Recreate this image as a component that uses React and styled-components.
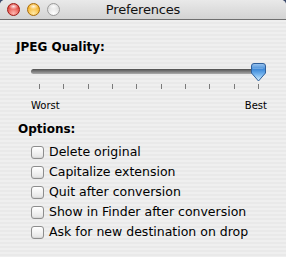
import React from 'react';
import styled, { createGlobalStyle } from 'styled-components';

const GlobalStyle = createGlobalStyle`
  html, body {
    margin: 0;
    padding: 0;
    background: #3b4a6b;
  }
  body {
    font-family: "DejaVu Sans", "Liberation Sans", sans-serif;
    color: #000;
  }
`;

const Window = styled.div`
  width: 286px;
  height: 257px;
  border-radius: 5px 5px 0 0;
  overflow: hidden;
  display: flex;
  flex-direction: column;
  background: repeating-linear-gradient(
    to bottom,
    #efefef 0,
    #efefef 2px,
    #e9e9e9 2px,
    #e9e9e9 4px
  );
`;

const TitleBar = styled.header`
  height: 19px;
  flex: none;
  display: grid;
  grid-template-columns: 1fr auto 1fr;
  align-items: center;
  padding: 0 7px;
  background: linear-gradient(to bottom, #e9e9e9, #d3d3d3);
  border-bottom: 1px solid #6f6f6f;
`;

const Lights = styled.div`
  display: flex;
  gap: 7px;
  align-items: center;
`;

const palettes = {
  close: ['#ffb7b0', '#e0443c', '#9c1a14'],
  minimize: ['#ffe9a8', '#f5b226', '#a86a08'],
  zoom: ['#ffffff', '#dcdcdc', '#9a9a9a'],
};

const Light = styled.span`
  width: 13px;
  height: 13px;
  border-radius: 50%;
  box-sizing: border-box;
  border: 1px solid ${({ kind }) => palettes[kind][2]};
  background:
    radial-gradient(ellipse 5px 3px at 50% 22%, rgba(255, 255, 255, 0.9), rgba(255, 255, 255, 0) 100%),
    radial-gradient(circle at 50% 85%, ${({ kind }) => palettes[kind][0]} 0, ${({ kind }) => palettes[kind][1]} 70%);
`;

const Title = styled.h1`
  margin: 0;
  font-size: 13px;
  font-weight: normal;
  letter-spacing: -0.2px;
  color: #111;
`;

const Body = styled.main`
  padding: 20px 16px 0 16px;
`;

const Heading = styled.h2`
  margin: 0;
  font-size: 12px;
  font-weight: bold;
  line-height: 15px;
`;

const Slider = styled.div`
  margin: 8px 0 0 15px;
  width: 236px;
`;

const TrackRow = styled.div`
  position: relative;
  height: 18px;
`;

const Track = styled.div`
  position: absolute;
  left: 0;
  right: 8px;
  top: 6px;
  height: 5px;
  border-radius: 3px;
  background: linear-gradient(to bottom, #4f4f4f, #858585 60%, #acacac);
`;

const Thumb = styled.svg`
  position: absolute;
  right: 1px;
  top: 0;
`;

const Ticks = styled.div`
  display: flex;
  justify-content: space-between;
  padding: 0 8px;
  margin-top: 3px;
`;

const Tick = styled.span`
  width: 1px;
  height: 5px;
  background: #7a7a7a;
`;

const Ends = styled.div`
  display: flex;
  justify-content: space-between;
  margin-top: 11px;
  font-size: 10px;
  line-height: 12px;
`;

const OptionsHeading = styled(Heading)`
  margin-top: 10px;
  margin-left: 2px;
`;

const OptionList = styled.ul`
  list-style: none;
  margin: 8px 0 0 15px;
  padding: 0;
  display: flex;
  flex-direction: column;
  gap: 6px;
`;

const Option = styled.li`
  display: flex;
  align-items: center;
  gap: 5px;
  font-size: 12.5px;
  line-height: 14px;
`;

const Box = styled.span`
  width: 13px;
  height: 13px;
  flex: none;
  box-sizing: border-box;
  border: 1px solid #8d8d8d;
  border-radius: 3px;
  background: linear-gradient(to bottom, #ffffff, #f2f2f2 50%, #e3e3e3);
  box-shadow: inset 0 -1px 1px rgba(0, 0, 0, 0.06);
`;

const options = [
  'Delete original',
  'Capitalize extension',
  'Quit after conversion',
  'Show in Finder after conversion',
  'Ask for new destination on drop',
];

const SliderThumb = () => (
  <Thumb width="15" height="19" viewBox="0 0 15 19">
    <defs>
      <linearGradient id="thumbFill" x1="0" y1="0" x2="0" y2="1">
        <stop offset="0" stopColor="#9ec6ef" />
        <stop offset="0.35" stopColor="#3f8ad8" />
        <stop offset="0.6" stopColor="#6fb0ec" />
        <stop offset="1" stopColor="#d4efff" />
      </linearGradient>
    </defs>
    <path
      d="M3 0.5 H12 Q14.5 0.5 14.5 3 V10 L7.5 18 L0.5 10 V3 Q0.5 0.5 3 0.5 Z"
      fill="url(#thumbFill)"
      stroke="#2f5f9a"
      strokeWidth="1"
    />
    <path d="M2.5 5.5 H12.5" stroke="#ffffff" strokeOpacity="0.35" strokeDasharray="1 1" />
  </Thumb>
);

export default function App() {
  return (
    <>
      <GlobalStyle />
      <Window>
        <TitleBar>
          <Lights>
            <Light kind="close" />
            <Light kind="minimize" />
            <Light kind="zoom" />
          </Lights>
          <Title>Preferences</Title>
          <span />
        </TitleBar>
        <Body>
          <Heading>JPEG Quality:</Heading>
          <Slider>
            <TrackRow>
              <Track />
              <SliderThumb />
            </TrackRow>
            <Ticks>
              {Array.from({ length: 10 }, (_, i) => (
                <Tick key={i} />
              ))}
            </Ticks>
            <Ends>
              <span>Worst</span>
              <span>Best</span>
            </Ends>
          </Slider>
          <OptionsHeading>Options:</OptionsHeading>
          <OptionList>
            {options.map((label) => (
              <Option key={label}>
                <Box />
                {label}
              </Option>
            ))}
          </OptionList>
        </Body>
      </Window>
    </>
  );
}
